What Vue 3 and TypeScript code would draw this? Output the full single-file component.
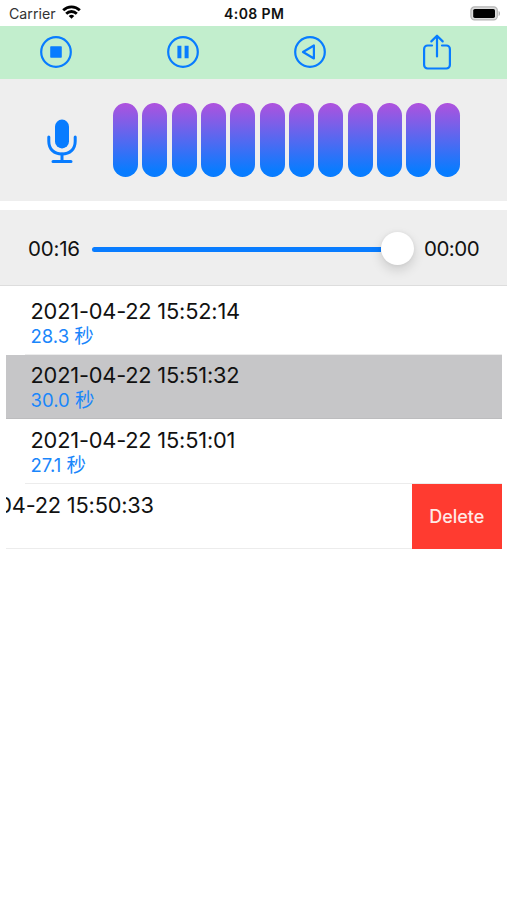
<script setup lang="ts">
interface Recording {
  date: string
  seconds?: string
  selected?: boolean
  swiped?: boolean
}

const levels: number[] = Array.from({ length: 12 }, (_, i) => i)

const recordings: Recording[] = [
  { date: '2021-04-22 15:52:14', seconds: '28.3' },
  { date: '2021-04-22 15:51:32', seconds: '30.0', selected: true },
  { date: '2021-04-22 15:51:01', seconds: '27.1' },
  { date: '2021-04-22 15:50:33', swiped: true },
]
</script>

<template>
  <main class="screen">
    <header class="status">
      <div class="carrier">
        <span>Carrier</span>
        <svg class="wifi" width="19" height="14" viewBox="0 0 19 14" fill="none" stroke="#000" stroke-width="2.8">
          <path d="M1.2 5.2a11.8 11.8 0 0 1 16.6 0" />
          <path d="M4.2 8.7a7.5 7.5 0 0 1 10.6 0" />
          <path d="M9.5 13.8 6.7 11a4 4 0 0 1 5.6 0z" fill="#000" stroke="none" />
        </svg>
      </div>
      <span class="clock">4:08 PM</span>
      <svg class="battery" width="31" height="15" viewBox="0 0 31 15">
        <rect x="0.9" y="0.9" width="26.4" height="13" rx="3.6" fill="#dcdcdc" stroke="#b4b4b4" stroke-width="1.2" />
        <rect x="3.2" y="2.9" width="21.8" height="9" rx="1.6" />
        <path d="M28.6 5v5c1.8-.6 1.8-4.4 0-5z" fill="#aaa" />
      </svg>
    </header>

    <nav class="toolbar">
      <button class="tool" aria-label="Stop">
        <svg width="34" height="40" viewBox="0 0 34 40" fill="none" stroke="currentColor" stroke-width="2.2">
          <circle cx="17" cy="20" r="14.8" />
          <rect x="11.2" y="14.2" width="11.6" height="11.6" rx="0.8" fill="currentColor" stroke="none" />
        </svg>
      </button>
      <button class="tool" aria-label="Pause">
        <svg width="34" height="40" viewBox="0 0 34 40" fill="none" stroke="currentColor" stroke-width="2.2">
          <circle cx="17" cy="20" r="14.8" />
          <path d="M13.4 13.8v12.4M20.6 13.8v12.4" stroke-width="4" />
        </svg>
      </button>
      <button class="tool" aria-label="Play">
        <svg width="34" height="40" viewBox="0 0 34 40" fill="none" stroke="currentColor" stroke-width="2.2" stroke-linejoin="round">
          <circle cx="17" cy="20" r="14.8" />
          <path d="M10 20 20.900 13.500V26.500z" />
        </svg>
      </button>
      <button class="tool" aria-label="Share">
        <svg width="34" height="40" viewBox="0 0 34 40" fill="none" stroke="currentColor" stroke-width="2.2" stroke-linecap="round" stroke-linejoin="round">
          <path d="M12 13.5H7.600a3.500 3.500 0 0 0-3.500 3.500V33a3.500 3.500 0 0 0 3.500 3.500H26.400a3.500 3.500 0 0 0 3.500-3.500V17a3.500 3.500 0 0 0-3.500-3.500H22" />
          <path d="M17 24.500V4M11.300 9.400 17 3.700l5.700 5.700" />
        </svg>
      </button>
    </nav>

    <section class="recorder">
      <svg class="mic" width="32" height="46" viewBox="0 0 32 46" fill="none" stroke="#087cff" stroke-width="3" stroke-linecap="round">
        <rect x="9" y="0.6" width="14" height="28.8" rx="7" fill="#087cff" stroke="none" />
        <path d="M2.800 18v4.300c0 8 5.400 12.800 13.200 12.800s13.200-4.800 13.200-12.800v-4.300" />
        <path d="M16 35.100v7.200M7 42.400h18" />
      </svg>
      <div class="meter">
        <i v-for="level in levels" :key="level" class="bar"></i>
      </div>
    </section>

    <section class="player">
      <span class="time">00:16</span>
      <div class="slider">
        <div class="track"></div>
        <div class="knob"></div>
      </div>
      <span class="time end">00:00</span>
    </section>

    <ul class="list">
      <li
        v-for="item in recordings"
        :key="item.date"
        class="row"
        :class="{ selected: item.selected, swiped: item.swiped }"
      >
        <div class="content">
          <span class="date">{{ item.date }}</span>
          <span v-if="item.seconds" class="duration">{{ item.seconds }} <span class="unit">秒</span></span>
        </div>
        <button v-if="item.swiped" class="delete">Delete</button>
      </li>
    </ul>
  </main>
</template>

<style>
body {
  margin: 0;
  background: #fff;
}
</style>

<style scoped>
.screen {
  box-sizing: border-box;
  width: 507px;
  height: 900px;
  overflow: hidden;
  background: #fff;
  color: #111;
  font-family: Inter, "Noto Sans CJK SC", sans-serif;
}
button {
  border: 0;
  padding: 0;
  font: inherit;
}
.status {
  box-sizing: border-box;
  height: 25.5px;
  padding: 1px 6px 0 9px;
  display: grid;
  grid-template-columns: 1fr auto 1fr;
  align-items: center;
}
.carrier {
  display: flex;
  align-items: center;
  gap: 6px;
  color: #333;
  font-size: 14.2px;
}
.wifi {
  margin-top: -2px;
}
.clock {
  margin-right: 1.5px;
  font-size: 14px;
  font-weight: 600;
  letter-spacing: 0.4px;
}
.battery {
  justify-self: end;
}
.toolbar {
  height: 53.5px;
  padding-right: 14px;
  background: #c2eecd;
  display: grid;
  grid-template-columns: repeat(4, 127px);
  justify-content: center;
}
.tool {
  display: flex;
  align-items: center;
  justify-content: center;
  background: none;
  color: #087cff;
}
.recorder {
  box-sizing: border-box;
  height: 122px;
  padding: 0 46px;
  display: flex;
  align-items: center;
  background: #eee;
}
.mic {
  margin-top: 3px;
}
.meter {
  display: flex;
  gap: 4.3px;
  margin-left: 35.2px;
}
.bar {
  width: 25px;
  height: 74px;
  border-radius: 12.5px;
  background: linear-gradient(#af52de, #087cff 92%);
}
.player {
  box-sizing: border-box;
  height: 76px;
  margin-top: 9px;
  padding: 1px 28px 0;
  display: flex;
  align-items: center;
  background: #eee;
  border-bottom: 1px solid #ddd;
}
.time {
  width: 52px;
  padding-top: 1px;
  font-size: 20.5px;
  letter-spacing: -0.2px;
  white-space: nowrap;
}
.time.end {
  width: 55px;
  letter-spacing: -0.5px;
}
.slider {
  display: flex;
  align-items: center;
  width: 322px;
  margin: 0 10px 0 12px;
}
.track {
  flex: 1;
  height: 5px;
  margin-top: 2px;
  border-radius: 3px 0 0 3px;
  background: #087cff;
}
.knob {
  width: 33px;
  height: 33px;
  border-radius: 50%;
  background: #fff;
  box-shadow: 0 5px 12px rgba(0, 0, 0, 0.14), 0 0 4px rgba(0, 0, 0, 0.06);
}
.list {
  list-style: none;
  margin: 4px 5px 0 6px;
  padding: 0;
}
.row {
  height: 64.7px;
  display: flex;
  overflow: hidden;
  position: relative;
}
.row::after {
  content: "";
  position: absolute;
  left: 19px;
  right: 0;
  bottom: 0;
  height: 1px;
  background: #ececec;
}
.row.selected {
  background: #c6c6c8;
}
.row.selected::after {
  left: 0;
  background: #bcbcbe;
}
.row.swiped::after {
  left: 0;
  right: 90px;
}
.content {
  flex: 1;
  display: flex;
  flex-direction: column;
  padding: 5.5px 0 0 24.5px;
  white-space: nowrap;
}
.swiped .content {
  flex: none;
  box-sizing: border-box;
  width: 496px;
  margin-left: -90.5px;
}
.date {
  font-size: 21.8px;
  line-height: 30px;
  letter-spacing: -0.2px;
}
.duration {
  font-size: 18.5px;
  line-height: 21px;
  color: #1a86fb;
}
.unit {
  font-size: 19.5px;
  line-height: 1;
}
.delete {
  flex: none;
  width: 90.5px;
  padding-top: 1px;
  background: #ff3b30;
  color: #ffe9e7;
  font-size: 18px;
  font-weight: 500;
}
</style>
